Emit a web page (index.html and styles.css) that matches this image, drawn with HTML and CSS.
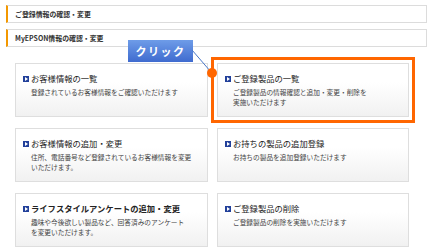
FILE: index.html
```html
<!DOCTYPE html>
<html>
<head>
  <meta charset="utf-8">
  <title>MyEPSON</title>
  <link rel="stylesheet" href="styles.css">
</head>
<body>
  <div class="page">
    <div class="section-bar">ご登録情報の確認・変更</div>
    <div class="section-bar">MyEPSON情報の確認・変更</div>

    <div class="menu">
      <div class="card">
        <div class="card-title"><span class="arrow"></span>お客様情報の一覧</div>
        <div class="card-desc">登録されているお客様情報をご確認いただけます</div>
      </div>
      <div class="card current">
        <div class="card-title"><span class="arrow"></span>ご登録製品の一覧</div>
        <div class="card-desc">ご登録製品の情報確認と追加・変更・削除を<br>実施いただけます</div>
      </div>
      <div class="card">
        <div class="card-title"><span class="arrow"></span>お客様情報の追加・変更</div>
        <div class="card-desc">住所、電話番号など登録されているお客様情報を変更<br>いただけます。</div>
      </div>
      <div class="card">
        <div class="card-title"><span class="arrow"></span>お持ちの製品の追加登録</div>
        <div class="card-desc">お持ちの製品を追加登録いただけます</div>
      </div>
      <div class="card">
        <div class="card-title strong"><span class="arrow"></span>ライフスタイルアンケートの追加・変更</div>
        <div class="card-desc">趣味や今後欲しい製品など、回答済みのアンケート<br>を変更いただけます。</div>
      </div>
      <div class="card">
        <div class="card-title"><span class="arrow"></span>ご登録製品の削除</div>
        <div class="card-desc">ご登録製品の削除を実施いただけます</div>
      </div>
    </div>

    <div class="callout">クリック</div>
    <svg class="pointer" width="434" height="252" viewBox="0 0 434 252">
      <line x1="192" y1="50" x2="211" y2="72" stroke="#4a78c8" stroke-width="1"/>
      <circle cx="212" cy="73" r="5" fill="#ff6600"/>
    </svg>
  </div>
</body>
</html>
```

FILE: styles.css
```css
body {
  margin: 0;
  background: #fff;
  font-family: "Noto Sans CJK JP", sans-serif;
  color: #333;
}

.page {
  position: relative;
  width: 434px;
  height: 252px;
  padding: 5px 0 0 6px;
  box-sizing: border-box;
}

.section-bar {
  box-sizing: border-box;
  width: 421px;
  height: 18px;
  border: 1px solid #dcdcdc;
  border-left: 2px solid #f39800;
  padding-left: 7px;
  margin-bottom: 6px;
  font-size: 6.9px;
  font-weight: bold;
  line-height: 16px;
  color: #333;
}

.menu {
  display: grid;
  grid-template-columns: 193px 192px;
  grid-auto-rows: 54px;
  column-gap: 9px;
  row-gap: 11px;
  margin: 16px 0 0 9px;
}

.card {
  box-sizing: border-box;
  border: 1px solid #dedede;
  background: linear-gradient(#fff 35%, #f1f1f1);
  padding: 9px 0 0 7px;
}

.card.current {
  outline: 3px solid #ff6600;
  outline-offset: 3px;
}

.card-title {
  display: flex;
  align-items: center;
  gap: 2px;
  font-size: 8.3px;
  line-height: 11px;
  color: #222;
  margin-bottom: 3px;
}

.card-title.strong {
  font-weight: bold;
}

.arrow {
  position: relative;
  width: 6px;
  height: 6px;
  background: #22409a;
  flex-shrink: 0;
}

.arrow::after {
  content: "";
  position: absolute;
  left: 2px;
  top: 1px;
  border-left: 3px solid #fff;
  border-top: 2px solid transparent;
  border-bottom: 2px solid transparent;
}

.card-desc {
  margin-left: 8px;
  font-size: 6.7px;
  line-height: 10px;
  color: #444;
}

.callout {
  position: absolute;
  left: 128px;
  top: 40px;
  width: 65px;
  height: 22px;
  background: linear-gradient(#6e9ce8, #3f6bcf);
  color: #fff;
  font-size: 11px;
  font-weight: bold;
  letter-spacing: 1.5px;
  line-height: 22px;
  text-align: center;
}

.pointer {
  position: absolute;
  left: 0;
  top: 0;
  pointer-events: none;
}
```
